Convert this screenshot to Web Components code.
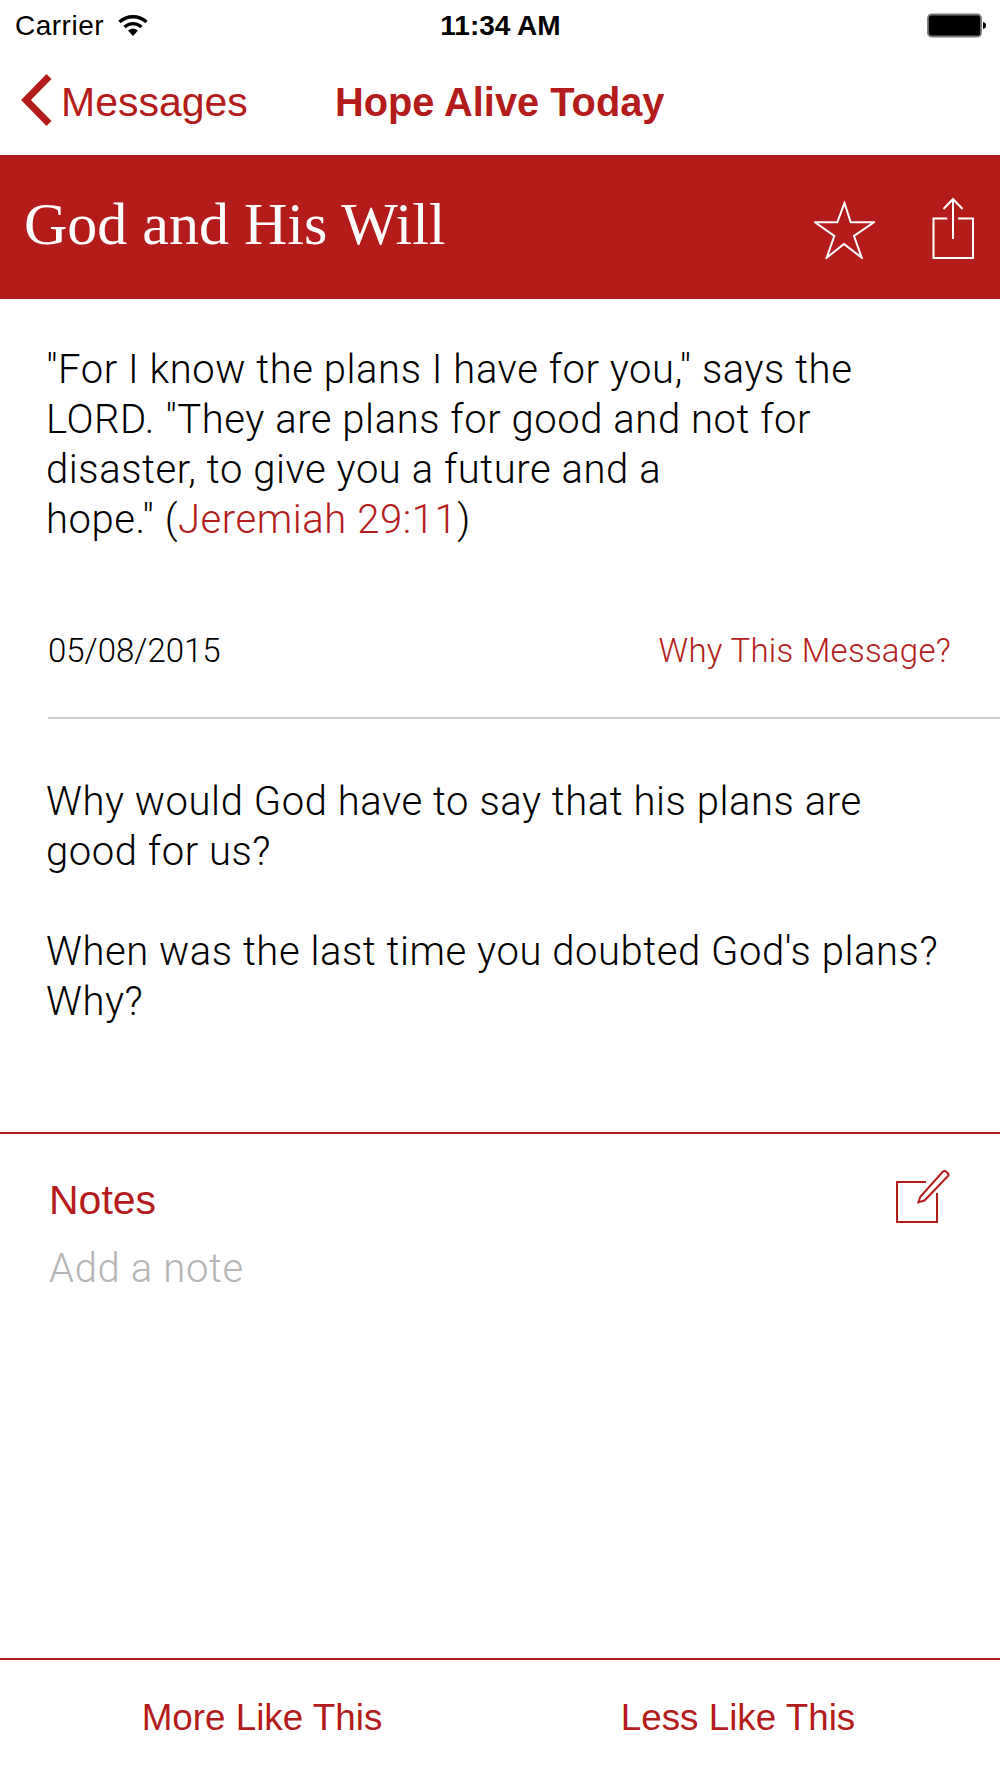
<!DOCTYPE html>
<html>
<head>
<meta charset="utf-8">
<title>Hope Alive Today</title>
<style>
  html, body { margin: 0; padding: 0; background: #fff; }
  body {
    width: 1000px;
    height: 1778px;
    overflow: hidden;
    display: flex;
    flex-direction: column;
    font-family: "Liberation Sans", Arial, sans-serif;
    --red: #b41c1b;
    --light: Roboto, "Liberation Sans", sans-serif;
  }
</style>
</head>
<body>
  <status-bar></status-bar>
  <nav-bar back="Messages" title="Hope Alive Today"></nav-bar>
  <title-banner>God and His Will</title-banner>
  <message-verse>"For I know the plans I have for you," says the<br>LORD. "They are plans for good and not for<br>disaster, to give you a future and a<br>hope." (<a>Jeremiah 29:11</a>)</message-verse>
  <message-meta date="05/08/2015" link="Why This Message?"></message-meta>
  <message-questions>
    <p>Why would God have to say that his plans are<br>good for us?</p>
    <p>When was the last time you doubted God's plans?<br>Why?</p>
  </message-questions>
  <notes-panel placeholder="Add a note">Notes</notes-panel>
  <feedback-bar left="More Like This" right="Less Like This"></feedback-bar>

<script>
class StatusBar extends HTMLElement {
  connectedCallback () {
    this.attachShadow({ mode: 'open' }).innerHTML = /* html */`
      <style>
        :host { display: grid; grid-template-columns: 1fr auto 1fr; align-items: center; height: 50px; padding: 1px 13px 0 15px; box-sizing: border-box; font-size: 28px; color: #000; }
        .left { display: flex; align-items: center; gap: 14px; letter-spacing: .5px; }
        .time { font-weight: 700; margin-left: -1px; }
        .right { justify-self: end; display: flex; }
        svg { display: block; }
      </style>
      <div class="left">
        <span>Carrier</span>
        <svg width="30" height="23" viewBox="0 0 30 23"><path d="M1.500 8C9 1 21 1 28.500 8" fill="none" stroke="#000" stroke-width="3.400"/><path d="M6.500 13C11.500 8.500 18.500 8.500 23.500 13" fill="none" stroke="#000" stroke-width="3.400"/><path d="M10 16.500C13 14.200 17 14.200 20 16.500L15 22Z" fill="#000"/></svg>
      </div>
      <span class="time">11:34 AM</span>
      <div class="right">
        <svg width="60" height="26" viewBox="0 0 60 26"><rect x="1" y="1.500" width="53" height="22" rx="3.500" fill="#000" stroke="#777" stroke-width="1.800"/><path d="M56 9c2 .3 3 1.700 3 3.500s-1 3.200-3 3.500Z" fill="#000"/></svg>
      </div>`
  }
}

class NavBar extends HTMLElement {
  connectedCallback () {
    this.attachShadow({ mode: 'open' }).innerHTML = /* html */`
      <style>
        :host { display: flex; align-items: center; height: 105px; padding-left: 21px; box-sizing: border-box; font-size: 41px; color: var(--red); }
        svg { flex: none; margin: -5px 9px 0 0; }
        .back { width: 274px; flex: none; }
        .title { font-weight: 700; font-size: 39.800px; }
      </style>
      <svg width="31" height="52" viewBox="0 0 31 52"><path d="M28 2.500 5 26l23 23.500" fill="none" stroke="#b41c1b" stroke-width="7"/></svg>
      <span class="back">${this.getAttribute('back')}</span>
      <span class="title">${this.getAttribute('title')}</span>`
  }
}

class TitleBanner extends HTMLElement {
  connectedCallback () {
    this.attachShadow({ mode: 'open' }).innerHTML = /* html */`
      <style>
        :host { display: flex; align-items: center; height: 144px; padding: 0 25px 0 24px; box-sizing: border-box; background: var(--red); color: #fff; }
        h1 { flex: 1; margin: 0 0 5px; font: 400 60px "Liberation Serif", serif; }
        .star { margin: 6px 56px 0 0; }
        .share { margin-top: 3px; }
      </style>
      <h1><slot></slot></h1>
      <svg class="star" width="61" height="58" viewBox="0 0 61 58"><path d="M30.500 2 36.700 21.300H60L40 35 47.700 56.700 30 43 12.700 56.700 20.300 35 1 21.300H23.300Z" fill="none" stroke="#fff" stroke-width="2"/></svg>
      <svg class="share" width="44" height="63" viewBox="0 0 44 63"><path d="M16.300 21.500H2.500V61H42V21.500H27" fill="none" stroke="#fff" stroke-width="2"/><path d="M22 2V42M12.500 12 22 2l9.500 10" fill="none" stroke="#fff" stroke-width="2"/></svg>`
  }
}

class MessageVerse extends HTMLElement {
  connectedCallback () {
    this.attachShadow({ mode: 'open' }).innerHTML = /* html */`
      <style>
        :host { display: block; padding: 46px 20px 0 46px; font: 300 40px/50px var(--light); letter-spacing: .56px; color: #000; }
        ::slotted(a) { color: var(--red); }
      </style>
      <slot></slot>`
  }
}

class MessageMeta extends HTMLElement {
  connectedCallback () {
    this.attachShadow({ mode: 'open' }).innerHTML = /* html */`
      <style>
        :host { display: flex; justify-content: space-between; align-items: center; margin: 73px 0 0 48px; padding-right: 49px; height: 101px; padding-bottom: 35px; box-sizing: border-box; border-bottom: 2px solid #ccc; font: 300 33px var(--light); }
        .link { color: var(--red); letter-spacing: .26px; }
      </style>
      <span>${this.getAttribute('date')}</span>
      <span class="link">${this.getAttribute('link')}</span>`
  }
}

class MessageQuestions extends HTMLElement {
  connectedCallback () {
    this.attachShadow({ mode: 'open' }).innerHTML = /* html */`
      <style>
        :host { display: flex; flex-direction: column; gap: 50px; padding: 58px 20px 0 46px; height: 413px; box-sizing: border-box; font: 300 40px/50px var(--light); letter-spacing: .56px; }
        ::slotted(p) { margin: 0; }
      </style>
      <slot></slot>`
  }
}

class NotesPanel extends HTMLElement {
  connectedCallback () {
    this.attachShadow({ mode: 'open' }).innerHTML = /* html */`
      <style>
        :host { display: block; flex: 1; border-top: 2px solid var(--red); padding: 41px 49px 0; box-sizing: border-box; }
        .head { display: flex; justify-content: space-between; align-items: flex-start; color: var(--red); font-size: 41px; line-height: 50px; height: 52px; }
        svg { margin-top: -5px; }
        .placeholder { margin-top: 17px; font: 300 40px/50px var(--light); letter-spacing: .65px; color: #b5b5b5; }
      </style>
      <div class="head">
        <span><slot></slot></span>
        <svg width="56" height="54" viewBox="0 0 56 54"><path d="M31 12H2V52H42V23" fill="none" stroke="#b41c1b" stroke-width="2"/><path d="M23.300 32.300 25.500 26.500 48 1.500Q49.500 .5 51 1.500L53 3.500Q54 5 53 6L29.500 30.500Z" fill="none" stroke="#b41c1b" stroke-width="2"/></svg>
      </div>
      <div class="placeholder">${this.getAttribute('placeholder')}</div>`
  }
}

class FeedbackBar extends HTMLElement {
  connectedCallback () {
    this.attachShadow({ mode: 'open' }).innerHTML = /* html */`
      <style>
        :host { display: grid; grid-template-columns: 1fr 1fr; height: 120px; padding: 0 24px; box-sizing: border-box; border-top: 2px solid var(--red); font-size: 36.800px; color: var(--red); text-align: center; align-items: center; }
        span { margin-top: -2px; }
      </style>
      <span>${this.getAttribute('left')}</span>
      <span>${this.getAttribute('right')}</span>`
  }
}

customElements.define('status-bar', StatusBar)
customElements.define('nav-bar', NavBar)
customElements.define('title-banner', TitleBanner)
customElements.define('message-verse', MessageVerse)
customElements.define('message-meta', MessageMeta)
customElements.define('message-questions', MessageQuestions)
customElements.define('notes-panel', NotesPanel)
customElements.define('feedback-bar', FeedbackBar)
</script>
</body>
</html>
